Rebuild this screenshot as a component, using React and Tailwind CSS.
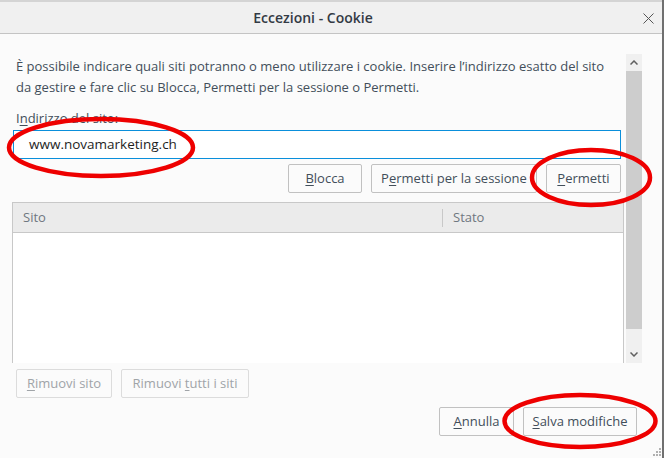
import React from 'react';

// Firefox "Eccezioni - Cookie" dialog with red hand-drawn circles on top

const FONT = { fontFamily: '"Open Sans", "Noto Sans", "Liberation Sans", sans-serif' };

// label with one underlined access key letter
const Key = ({ before = '', k, after = '' }) => (
  <span>
    {before}
    <span className="underline underline-offset-2">{k}</span>
    {after}
  </span>
);

const Btn = ({ children, className = '', disabled = false }) => (
  <div
    className={
      'h-[29px] flex items-center justify-center rounded-[2px] border text-[13px] ' +
      (disabled
        ? 'border-[#dcdcdc] text-[#a0a4a8] bg-[#fbfbfb] '
        : 'border-[#c1c1c1] text-[#424e5a] bg-[#fbfbfb] ') +
      className
    }
  >
    {children}
  </div>
);

const Chevron = ({ up }) => (
  <svg width="8" height="5" viewBox="0 0 8 5">
    <path
      d={up ? 'M0.5 4.5 L4 1 L7.5 4.5' : 'M0.5 0.5 L4 4 L7.5 0.5'}
      fill="none"
      stroke="#606060"
      strokeWidth="1.5"
    />
  </svg>
);

export default function App() {
  return (
    <div className="relative w-[664px] h-[458px] overflow-hidden bg-[#fbfbfb] flex flex-col" style={FONT}>
      {/* strip of the window behind */}
      <div className="h-[2px] bg-[#d4d4d4] shrink-0" />

      {/* title bar */}
      <div className="h-[32px] shrink-0 bg-[#f0f0f0] border-b border-[#c4c4c4] flex items-center relative">
        <div className="w-[626px] text-center text-[14px] font-semibold text-[#333a44]">Eccezioni - Cookie</div>
        <svg className="absolute left-[643px] top-[11px]" width="11" height="11" viewBox="0 0 11 11">
          <path d="M0.5 0.5 L10.5 10.5 M10.5 0.5 L0.5 10.5" stroke="#555" strokeWidth="1" />
        </svg>
      </div>

      {/* scrolled content + scrollbar */}
      <div className="flex mt-[20px] h-[309px] shrink-0">
        <div className="w-[614px] ml-[12px] overflow-hidden flex flex-col text-[#424e5a]">
          <p className="ml-[4px] mt-[2px] text-[13px] leading-[21px] whitespace-nowrap">
            È possibile indicare quali siti potranno o meno utilizzare i cookie. Inserire l’indirizzo esatto del sito
            <br />
            da gestire e fare clic su Blocca, Permetti per la sessione o Permetti.
          </p>
          <div className="ml-[4px] mt-[10px] text-[13px] leading-[20px]">
            <Key before="I" k="n" after="dirizzo del sito:" />
          </div>
          <div className="ml-[1px] mt-[2px] w-[608px] h-[29px] border border-[#0a8fdb] bg-white flex items-center pl-[15px] text-[13.5px] text-[#1e1e1e]">
            www.novamarketing.ch
          </div>
          <div className="mt-[5px] w-[609px] flex justify-end gap-[9px]">
            <Btn className="w-[74px]">
              <Key k="B" after="locca" />
            </Btn>
            <Btn className="w-[166px]">
              <Key before="P" k="e" after="rmetti per la sessione" />
            </Btn>
            <Btn className="w-[75px]">
              <Key k="P" after="ermetti" />
            </Btn>
          </div>
          <div className="mt-[9px] w-[612px] flex-1 border-l border-r border-t border-[#c8c8c8] flex flex-col">
            <div className="h-[30px] bg-[#ebebeb] border-b border-[#c8c8c8] flex items-center text-[13px] text-[#6f7780]">
              <div className="w-[430px] pl-[10px] h-[18px] flex items-center border-r border-[#c8c8c8]">Sito</div>
              <div className="pl-[10px]">Stato</div>
            </div>
            <div className="flex-1 bg-white" />
          </div>
        </div>
        <div className="w-[16px] flex flex-col bg-[#f0f0f0]">
          <div className="h-[17px] flex items-center justify-center">
            <Chevron up />
          </div>
          <div className="h-[258px] bg-[#cdcdcd]" />
          <div className="flex-1" />
          <div className="h-[17px] flex items-center justify-center">
            <Chevron />
          </div>
        </div>
      </div>

      {/* bottom buttons */}
      <div className="flex gap-[9px] ml-[16px] mt-[6px]">
        <Btn disabled className="w-[96px]">
          <Key k="R" after="imuovi sito" />
        </Btn>
        <Btn disabled className="w-[128px]">
          <Key before="Rimuovi " k="t" after="utti i siti" />
        </Btn>
      </div>
      <div className="flex justify-end gap-[9px] mt-[9px] w-[637px]">
        <Btn className="w-[75px] h-[28px]">
          <Key k="A" after="nnulla" />
        </Btn>
        <Btn className="w-[114px] h-[28px]">
          <Key k="S" after="alva modifiche" />
        </Btn>
      </div>

      {/* resize grip */}
      <svg className="absolute left-[652px] top-[447px]" width="9" height="9" viewBox="0 0 9 9">
        <g fill="#b0b0b0">
          <rect x="7" y="1" width="2" height="2" />
          <rect x="4" y="4" width="2" height="2" />
          <rect x="7" y="4" width="2" height="2" />
          <rect x="1" y="7" width="2" height="2" />
          <rect x="4" y="7" width="2" height="2" />
          <rect x="7" y="7" width="2" height="2" />
        </g>
      </svg>

      {/* right edge of the window behind */}
      <div className="absolute right-0 top-0 w-[2px] h-full bg-[#707070]" />

      {/* red marker circles drawn over the screenshot */}
      <svg className="absolute inset-0 pointer-events-none" width="664" height="458" viewBox="0 0 664 458">
        <g fill="none" stroke="#ee0000" strokeWidth="4.5">
          <ellipse cx="101" cy="147.5" rx="92" ry="28.5" />
          <ellipse cx="591" cy="177.5" rx="59" ry="27.5" />
          <ellipse cx="580" cy="421" rx="75.5" ry="26" />
        </g>
      </svg>
    </div>
  );
}
